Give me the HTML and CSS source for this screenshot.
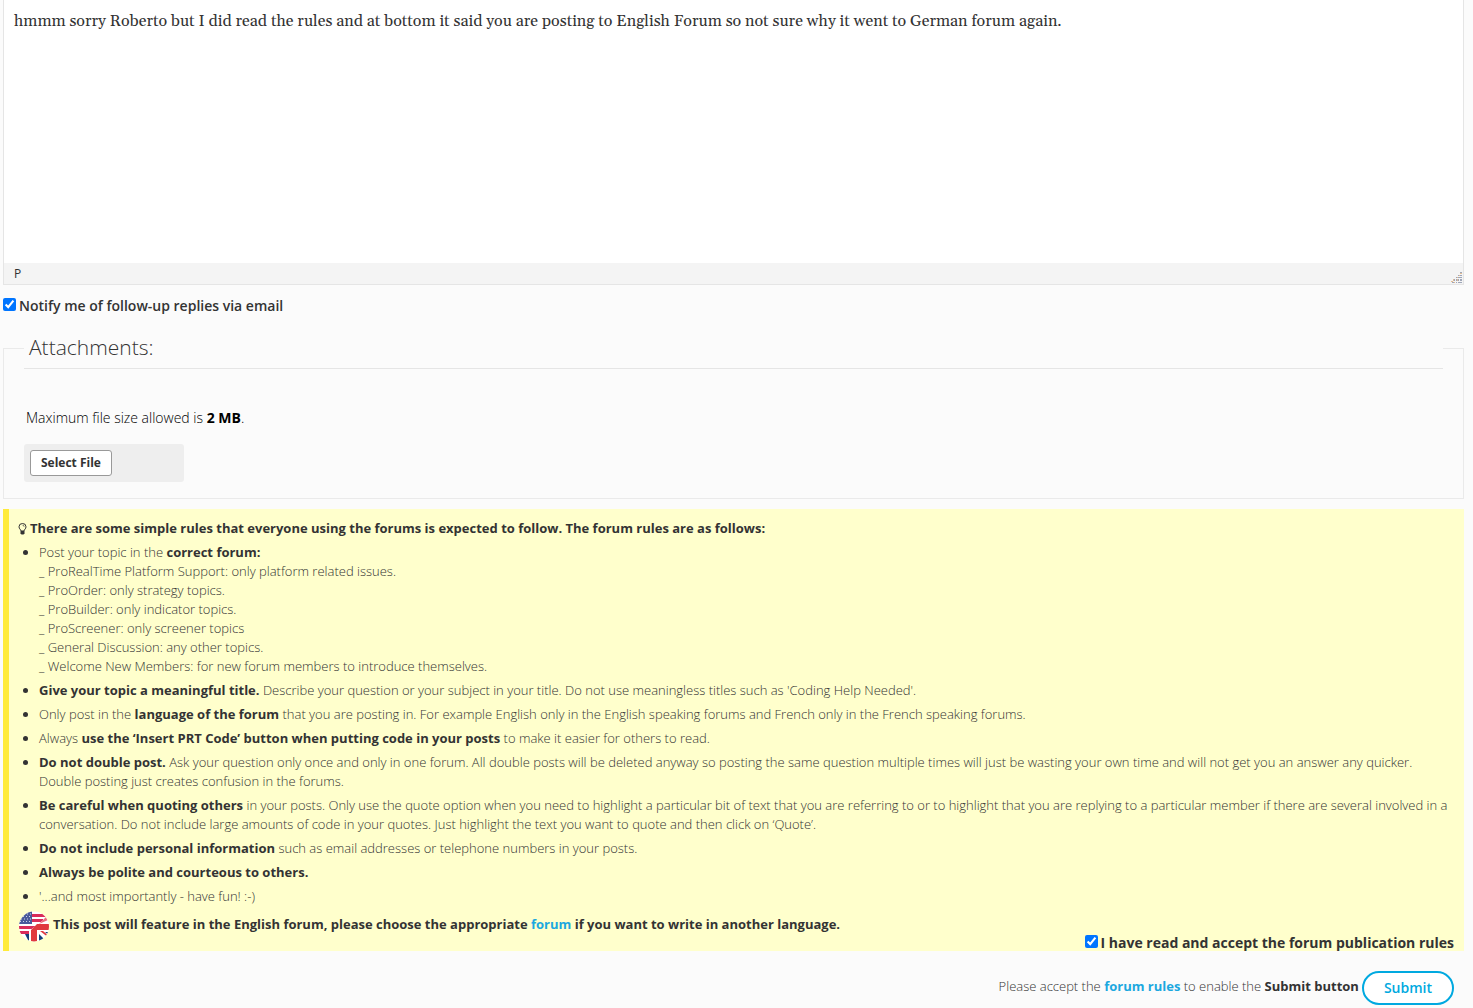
FILE: index.html
```html
<!DOCTYPE html>
<html lang="en">
<head>
<meta charset="utf-8">
<title>Reply to topic</title>
<link rel="stylesheet" href="styles.css">
</head>
<body>
<form class="reply">
  <div class="editor">
    <textarea class="editor-text" aria-label="Reply">hmmm sorry Roberto but I did read the rules and at bottom it said you are posting to English Forum so not sure why it went to German forum again.</textarea>
    <div class="editor-status">
      <span>P</span>
      <svg class="grip" width="11" height="11" viewBox="0 0 11 11" aria-hidden="true">
        <path d="M9 0h2v1h-2zM7 3h1v1h-1zM9 3h2v1h-2zM5 5h1v1h-1zM7 5h4v1h-4zM3 7h1v2h-1zM5 7h1v2h-1zM7 7h1v2h-1zM9 7h2v2h-2zM1 10h2v1h-2zM5 10h1v1h-1zM7 10h4v1h-4z" fill="#9fa6b8"/>
        <path d="M9 1h2v1h-2zM8 3h1v1h-1zM6 5h1v1h-1zM2 7h1v2h-1zM6 7h1v2h-1zM0 9h2v1h-2zM3 10h1v1h-1z" fill="#e3bd94"/>
      </svg>
    </div>
  </div>

  <label class="check notify"><input type="checkbox" checked>Notify me of follow-up replies via email</label>

  <fieldset class="attachments">
    <legend>Attachments:</legend>
    <p class="limit">Maximum file size allowed is <strong>2 MB</strong>.</p>
    <div class="file-zone"><button type="button" class="file-button">Select File</button></div>
  </fieldset>

  <section class="rules">
    <p class="rules-title">
      <svg class="bulb" width="9" height="12" viewBox="0 0 9 12" aria-hidden="true">
        <path d="M3 8C3 6.500 1 6 1 3.800a3.500 3.300 0 0 1 7 0C8 6 6 6.500 6 8z" fill="none" stroke="#333" stroke-width="1"/>
        <path d="M4.500 2.200q1.500 0 1.600 1.500" fill="none" stroke="#333" stroke-width=".7"/>
        <path d="M2.500 8h4v2.500l-1 1h-2l-1-1z" fill="#333"/>
      </svg>
      <strong>There are some simple rules that everyone using the forums is expected to follow. The forum rules are as follows:</strong>
    </p>
    <ul class="rules-list">
      <li>Post your topic in the <strong>correct forum:</strong><br>
        _ ProRealTime Platform Support: only platform related issues.<br>
        _ ProOrder: only strategy topics.<br>
        _ ProBuilder: only indicator topics.<br>
        _ ProScreener: only screener topics<br>
        _ General Discussion: any other topics.<br>
        _ Welcome New Members: for new forum members to introduce themselves.</li>
      <li><strong>Give your topic a meaningful title.</strong> Describe your question or your subject in your title. Do not use meaningless titles such as 'Coding Help Needed'.</li>
      <li>Only post in the <strong>language of the forum</strong> that you are posting in. For example English only in the English speaking forums and French only in the French speaking forums.</li>
      <li>Always <strong>use the ‘Insert PRT Code’ button when putting code in your posts</strong> to make it easier for others to read.</li>
      <li><strong>Do not double post.</strong> Ask your question only once and only in one forum. All double posts will be deleted anyway so posting the same question multiple times will just be wasting your own time and will not get you an answer any quicker. Double posting just creates confusion in the forums.</li>
      <li><strong>Be careful when quoting others</strong> in your posts. Only use the quote option when you need to highlight a particular bit of text that you are referring to or to highlight that you are replying to a particular member if there are several involved in a conversation. Do not include large amounts of code in your quotes. Just highlight the text you want to quote and then click on ‘Quote’.</li>
      <li><strong>Do not include personal information</strong> such as email addresses or telephone numbers in your posts.</li>
      <li><strong>Always be polite and courteous to others.</strong></li>
      <li>'...and most importantly - have fun! :-)</li>
    </ul>
    <div class="rules-foot">
      <p class="language">
        <svg class="flag" width="31" height="31" viewBox="0 0 31 31" aria-hidden="true">
          <clipPath id="round"><circle cx="16" cy="15.500" r="15"/></clipPath>
          <g clip-path="url(#round)">
            <path d="M0 0h31v31H0z" fill="#fff"/>
            <path d="M14 3h14v3H14zM14 8h11v3H14zM0 15h19v3H0zM0 20h13v3H0z" fill="#d92c5a"/>
            <path d="M0 0h14v13H0z" fill="#4a5a9b"/>
            <path d="M3 3h11M2 5.500h12M3 8h11M2 10.500h12" stroke="#cdd4e8" stroke-width="1" stroke-dasharray="1 2"/>
            <path d="M28 7L11 20v11h20V7z" fill="#fff"/>
            <path d="M28 6l2 3-9 4z" fill="#ec6b7a"/>
            <path d="M19 13h12v6H19v12h-6V19z" fill="#e0393f"/>
            <path d="M7 23h4v8zM0 25l2-1 8 7H0zM21 23l8 8h-8zM27 21h4v3z" fill="#123f78"/>
            <path d="M22 20h3l6 5v2z" fill="#e0393f"/>
          </g>
        </svg>
        <strong>This post will feature in the English forum, please choose the appropriate <a href="#">forum</a> if you want to write in another language.</strong>
      </p>
      <label class="check accept"><input type="checkbox" checked>I have read and accept the forum publication rules</label>
    </div>
  </section>

  <div class="actions">
    <p>Please accept the <a href="#">forum rules</a> to enable the <strong>Submit button</strong></p>
    <button type="submit" class="submit">Submit</button>
  </div>
</form>
</body>
</html>
```

FILE: styles.css
```css
* { box-sizing: border-box; }

body {
  margin: 0;
  background: #fbfbfb;
  color: #333;
  font: 300 13px/19px "Open Sans", sans-serif;
}

p, ul { margin: 0; padding: 0; }
strong { font-weight: 700; }
a { color: #1ba8df; font-weight: 700; text-decoration: none; }

.reply { padding: 0 9px 0 3px; }

.editor {
  border: 1px solid #e5e5e5;
  border-top: 0;
  background: #fff;
}
.editor-text {
  display: block;
  width: 100%;
  height: 263px;
  padding: 9px 10px;
  border: 0;
  outline: 0;
  resize: none;
  background: #fff;
  color: #333;
  font: 400 16px/24px Georgia, Gelasio, "Liberation Serif", serif;
}
.editor-status {
  display: flex;
  justify-content: space-between;
  align-items: flex-end;
  height: 21px;
  padding: 0 1px 1px 10px;
  background: #f4f4f4;
  font-size: 12px;
  font-weight: 400;
}
.grip { display: block; }

.check {
  display: flex;
  align-items: flex-start;
  gap: 3px;
  font-size: 14px;
  font-weight: 600;
  line-height: 17px;
}
.check input { width: 13px; height: 13px; margin: 1px 0 0; accent-color: #0075ff; }
.notify { margin-top: 12px; }

.attachments {
  min-width: 0;
  margin: 14px 0 0;
  padding: 0 20px 16px;
  border: 1px solid #eaeaea;
}
.attachments legend {
  width: 100%;
  padding: 0 5px 2px;
  border-bottom: 1px solid #e5e5e5;
  font-size: 21px;
  line-height: 38px;
}
.limit {
  margin: 39px 2px 17px;
  color: #000;
  font-size: 14px;
}
.file-zone {
  width: 160px;
  padding: 6px;
  border-radius: 3px;
  background: #eee;
}
.file-button {
  display: block;
  height: 26px;
  padding: 0 10px;
  border: 1px solid #999;
  border-radius: 3px;
  background: #fff;
  color: #333;
  font: 700 12px/24px "Open Sans", sans-serif;
}

.rules {
  margin-top: 10px;
  padding: 10px 10px 0 9px;
  border-left: 6px solid #ffeb3b;
  background: #ffffcc;
}
.rules-title { display: flex; align-items: center; gap: 3px; }
.rules-list { padding-left: 21px; }
.rules-list li { margin-top: 5px; }
.rules-foot {
  display: flex;
  justify-content: space-between;
  align-items: flex-start;
  padding-top: 5px;
}
.language { display: flex; gap: 4px; line-height: 26px; }
.accept { margin-top: 23px; font-weight: 700; }

.actions {
  display: flex;
  justify-content: flex-end;
  gap: 3px;
  padding: 20px 10px 4px 0;
}
.actions p { line-height: 30px; }
.submit {
  height: 34px;
  padding: 0 20px;
  border: 2px solid #00a9e0;
  border-radius: 17px;
  background: #fff;
  color: #00a9e0;
  font: 600 14px/30px "Open Sans", sans-serif;
}
```
